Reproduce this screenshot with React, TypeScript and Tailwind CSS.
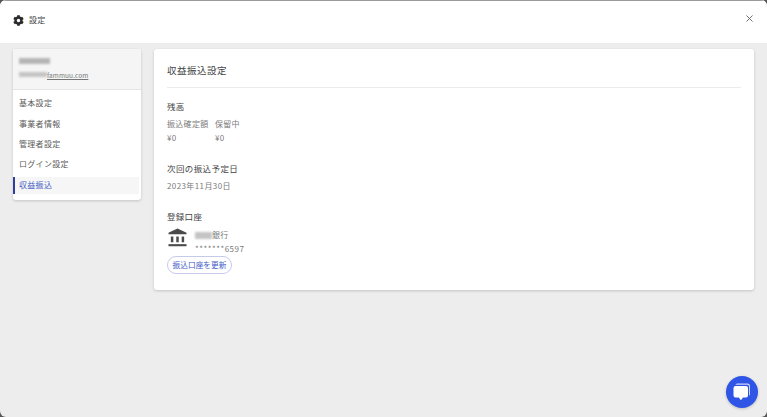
import { X } from "lucide-react";
import { FaCog } from "react-icons/fa";

const navItems = ["基本設定", "事業者情報", "管理者設定", "ログイン設定"];

function BankIcon() {
  return (
    <svg viewBox="0 0 20 20" className="ml-[1px] h-[19px] w-[19px] text-[#4a4a4a]" fill="currentColor">
      <path d="M10 0.5 19.5 5v1.6H0.5V5z" />
      <rect x="3" y="9" width="2.6" height="6" />
      <rect x="8.7" y="9" width="2.6" height="6" />
      <rect x="14.4" y="9" width="2.6" height="6" />
      <rect x="0.5" y="17" width="19" height="2.2" />
    </svg>
  );
}

function ChatIcon() {
  return (
    <svg viewBox="0 0 20 20" className="h-[20px] w-[20px]" fill="white">
      <path d="M5 1.5h10.5a2.5 2.5 0 0 1 2.5 2.5v8a2 2 0 0 1-1 1.7V4.4a1.6 1.6 0 0 0-1.6-1.6H3.4A2.5 2.5 0 0 1 5 1.5z" opacity="0.75" />
      <path d="M3.5 4h10.5a2 2 0 0 1 2 2v7.5a2 2 0 0 1-2 2h-3l-1.7 2.3a.5.5 0 0 1-.8 0L6.8 15.5H3.5a2 2 0 0 1-2-2V6a2 2 0 0 1 2-2z" />
    </svg>
  );
}

export default function App() {
  return (
    <div className="h-[417px] w-[767px] bg-[#555555]">
      <div
        className="relative flex h-[417px] w-[767px] flex-col overflow-hidden rounded-[6px] bg-[#ededed] text-[8px] text-[#5c5c5c]"
        style={{ fontFamily: '"Noto Sans CJK JP", "Noto Sans", sans-serif' }}
      >
        {/* header */}
        <header className="flex h-[43px] shrink-0 items-center justify-between border-t border-[#9a9a9a] bg-white pr-[12px] pb-[4px] pl-[13px]">
          <div className="flex items-center gap-[5px] text-[#444]">
            <FaCog size={11} className="text-[#2b2b2b]" />
            <span className="tracking-[0.2px]">設定</span>
          </div>
          <X size={11} className="mb-[4px] text-[#666]" />
        </header>

        <div className="flex items-start gap-[13px] pt-[6px] pl-[13px]">
          {/* sidebar */}
          <aside className="w-[128px] shrink-0 overflow-hidden rounded-[3px] bg-white shadow-[0_1px_3px_rgba(0,0,0,0.18)]">
            <div className="flex h-[41px] flex-col justify-center gap-[7px] border-b border-[#e4e4e4] bg-[#f5f5f5] px-[6px] pb-[2px]">
              <div className="h-[6px] w-[31px] bg-[#b5b5b5] blur-[1px]" />
              <div className="flex items-center text-[6.5px] leading-[8px] tracking-[0.1px] text-[#777] underline">
                <span className="h-[5px] w-[28px] bg-[#c4c4c4] blur-[1px]" />
                <span>fammuu.com</span>
              </div>
            </div>
            <nav className="flex flex-col pt-[3px] pb-[6px] tracking-[0.3px]">
              {navItems.map((item) => (
                <div key={item} className="flex h-[20.4px] items-center pl-[6px] text-[#5c5c5c]">
                  {item}
                </div>
              ))}
              <div className="mt-[2px] mr-[2px] flex h-[17px] items-center border-l-2 border-[#2c3e9e] bg-[#f6f6f6] pl-[4px] text-[#3f5bc5]">
                収益振込
              </div>
            </nav>
          </aside>

          {/* main card */}
          <main className="h-[241px] w-[600px] shrink-0 rounded-[3px] bg-white px-[13px] shadow-[0_1px_3px_rgba(0,0,0,0.18)]">
            <h1 className="flex h-[39px] items-center border-b border-[#ececec] pt-[4px] text-[9.5px] tracking-[0.5px] text-[#444]">
              収益振込設定
            </h1>

            <section className="mt-[12px]">
              <h2 className="text-[8.5px] leading-[13px] tracking-[0.3px] text-[#444]">残高</h2>
              <div className="mt-[5px] flex gap-[6px] tracking-[0.3px] text-[#7a7a7a]">
                <div className="flex w-[42px] flex-col gap-[2px]">
                  <span className="whitespace-nowrap leading-[12px]">振込確定額</span>
                  <span className="leading-[12px]">¥0</span>
                </div>
                <div className="flex flex-col gap-[2px]">
                  <span className="leading-[12px]">保留中</span>
                  <span className="leading-[12px]">¥0</span>
                </div>
              </div>
            </section>

            <section className="mt-[18px]">
              <h2 className="text-[8.5px] leading-[13px] tracking-[0.4px] text-[#444]">次回の振込予定日</h2>
              <p className="mt-[5px] leading-[12px] tracking-[0.4px] text-[#7a7a7a]">2023年11月30日</p>
            </section>

            <section className="mt-[18px]">
              <h2 className="text-[8.5px] leading-[13px] tracking-[0.3px] text-[#444]">登録口座</h2>
              <div className="mt-[5px] flex items-start gap-[8px]">
                <BankIcon />
                <div className="mt-[1px] tracking-[0.3px] text-[#7a7a7a]">
                  <div className="flex items-center leading-[12px]">
                    <span className="h-[7px] w-[17px] bg-[#c4c4c4] blur-[1px]" />
                    <span>銀行</span>
                  </div>
                  <div className="mt-[2px] leading-[12px] tracking-[0.5px]">*******6597</div>
                </div>
              </div>
            </section>
            <button className="mt-[1px] flex h-[18px] w-[65px] items-center justify-center rounded-full border border-[#c5cae9] bg-white text-[7.7px] whitespace-nowrap text-[#3f5bc5]">
              振込口座を更新
            </button>
          </main>
        </div>

        {/* chat bubble */}
        <button className="absolute right-[9px] bottom-[9px] flex h-[32px] w-[32px] items-center justify-center rounded-full bg-[#2f55e6] shadow-[0_1px_3px_rgba(0,0,0,0.2)]">
          <ChatIcon />
        </button>
      </div>
    </div>
  );
}
